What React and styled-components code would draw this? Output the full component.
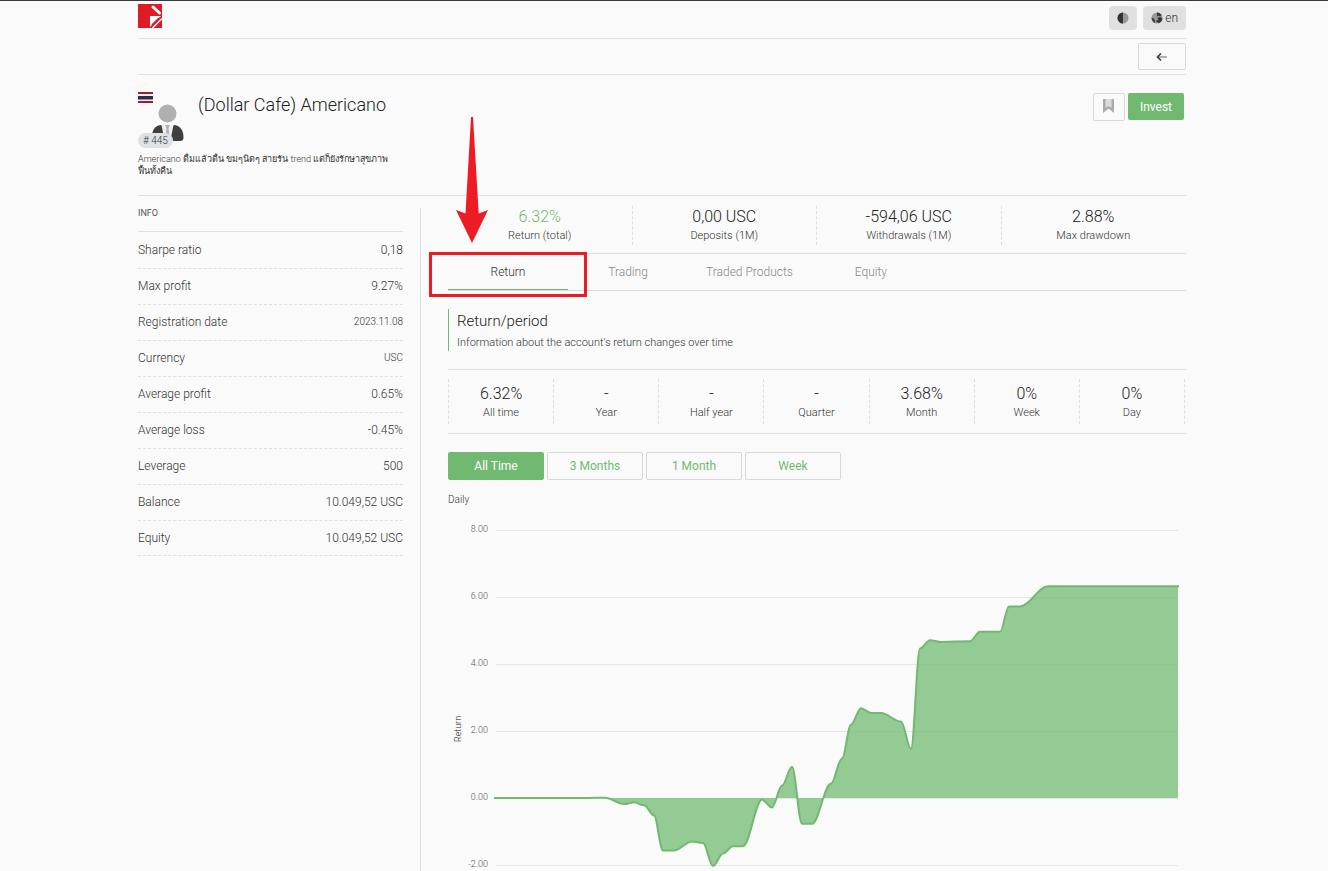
import React, { useState } from "react";
import styled, { createGlobalStyle } from "styled-components";

const GlobalStyle = createGlobalStyle`
  * {
    box-sizing: border-box;
  }
  body {
    margin: 0;
    background: #fafafa;
    color: #333;
    font-family: Roboto, "Noto Sans", sans-serif;
    font-weight: 300;
    font-size: 12px;
    line-height: 16px;
  }
  button {
    font-family: inherit;
    cursor: pointer;
  }
`;

const Page = styled.div`
  border-top: 1px solid #3a3a3f;
  padding: 0 142px 0 138px;
`;

const TopBar = styled.header`
  display: flex;
  justify-content: space-between;
  align-items: flex-start;
  height: 38px;
  padding-top: 3px;
  border-bottom: 1px solid #dee0e4;
`;

const LogoLink = styled.a`
  display: block;
  height: 24px;
`;

const TopActions = styled.div`
  display: flex;
  gap: 6px;
  padding-top: 2px;
`;

const SmallButton = styled.button`
  display: flex;
  align-items: center;
  justify-content: center;
  gap: 2px;
  height: 24px;
  padding: 0 8px;
  border: 0;
  border-radius: 4px;
  background: #e0e0e0;
  color: #333;
  font-size: 12px;
  font-weight: 300;
`;

const BackBar = styled.div`
  display: flex;
  justify-content: flex-end;
  padding: 4px 0;
  border-bottom: 1px solid #dee0e4;
`;

const BackButton = styled.button`
  display: flex;
  align-items: center;
  justify-content: center;
  width: 48px;
  height: 27px;
  border: 1px solid #d8d8da;
  border-radius: 2px;
  background: #fafafa;
`;

const Profile = styled.section`
  display: grid;
  grid-template-columns: 60px 1fr auto;
  padding: 17px 2px 18px 0;
  border-bottom: 1px solid #dee0e4;
`;

const Avatar = styled.div`
  position: relative;
  height: 59px;
`;

const AvatarArt = styled.svg`
  display: block;
`;

const Rank = styled.span`
  position: absolute;
  left: 0;
  bottom: 3px;
  padding: 0 5px;
  border-radius: 8px;
  background: #dee1e5;
  font-size: 10px;
  line-height: 15px;
`;

const Title = styled.h1`
  margin: 1px 0 0;
  color: #222;
  font-size: 18px;
  font-weight: 300;
  line-height: 24px;
`;

const ProfileActions = styled.div`
  display: flex;
  align-items: flex-start;
  gap: 3px;
  padding-top: 1px;
`;

const BookmarkButton = styled.button`
  display: flex;
  align-items: center;
  justify-content: center;
  width: 32px;
  height: 28px;
  padding: 0 2px 2px 0;
  border: 1px solid #d8d8da;
  border-radius: 2px;
  background: #fafafa;
`;

const InvestButton = styled.button`
  width: 56px;
  height: 27px;
  padding: 0;
  border: 0;
  border-radius: 2px;
  background: #71b971;
  color: #fff;
  font-size: 12px;
`;

const Description = styled.p`
  grid-column: 1 / -1;
  max-width: 256px;
  margin: 2px 0 0;
  font-size: 9px;
  line-height: 12px;
`;

const Columns = styled.div`
  display: flex;
`;

const Aside = styled.aside`
  flex: 0 0 283px;
  margin-top: 12px;
  padding-right: 17px;
  border-right: 1px solid #dee0e4;
`;

const AsideTitle = styled.h2`
  height: 24px;
  margin: 0;
  border-bottom: 1px solid #dee0e4;
  color: #555;
  font-size: 9px;
  font-weight: 400;
  line-height: 10px;
`;

const InfoList = styled.dl`
  margin: 0;
`;

const InfoRow = styled.div`
  display: flex;
  justify-content: space-between;
  align-items: center;
  height: 36px;
  padding-bottom: 1px;
  & + & {
    border-top: 1px dashed #dcdee0;
  }
  &:last-child {
    border-bottom: 1px dashed #dcdee0;
    padding-bottom: 0;
  }
`;

const InfoValue = styled.dd`
  margin: 0;
  font-size: ${(props) => (props.$small ? "10px" : "12px")};
`;

const Main = styled.main`
  flex: 1;
  min-width: 0;
  padding-left: 27px;
`;

const Stats = styled.div`
  display: flex;
  padding: 10px 1px 8px 0;
  border-bottom: 1px solid #dedede;
`;

const Stat = styled.div`
  flex: 1;
  padding-top: 1px;
  text-align: center;
  border-right: 1px dashed #dcdee0;
  &:last-child {
    border-right: 0;
  }
`;

const Periods = styled.div`
  display: flex;
  margin-top: 18px;
  padding: 9px 1px 9px 0;
  border-top: 1px solid #dee0e4;
  border-bottom: 1px solid #dee0e4;
`;

const Period = styled.div`
  flex: 1;
  padding: 5px 0 2px;
  text-align: center;
  border-right: 1px dashed #dcdee0;
  &:first-child {
    border-left: 1px dashed #dcdee0;
  }
`;

const Figure = styled.div`
  color: ${(props) => (props.$positive ? "#71b971" : "#222")};
  font-size: 16px;
  line-height: 20px;
`;

const Caption = styled.div`
  font-size: 11px;
  line-height: 18px;
`;

const Tabs = styled.nav`
  display: flex;
  height: 37px;
  border-bottom: 1px solid #dadcdc;
`;

const TabItem = styled.div`
  position: relative;
  display: flex;
`;

const Tab = styled.button`
  min-width: 120px;
  padding: 0 18px;
  border: 0;
  border-bottom: 1px solid ${(props) => (props.$active ? "#71b971" : "transparent")};
  background: none;
  color: ${(props) => (props.$active ? "#333" : "#888")};
  font-size: 12px;
  font-weight: 300;
`;

const Highlight = styled.div`
  position: absolute;
  left: -19px;
  top: -2px;
  width: 158px;
  height: 45px;
  border: 3px solid #ed1c24;
  pointer-events: none;
`;

const HighlightArrow = styled.svg`
  position: absolute;
  left: 8px;
  top: -137px;
  pointer-events: none;
`;

const SectionHead = styled.div`
  margin-top: 18px;
  padding-left: 8px;
  border-left: 1px solid #71b971;
`;

const SectionTitle = styled.h2`
  margin: 0 0 2px;
  color: #222;
  font-size: 15px;
  font-weight: 300;
  line-height: 24px;
`;

const SectionText = styled.p`
  margin: 0;
  font-size: 11px;
`;

const Ranges = styled.div`
  display: flex;
  gap: 3px;
  margin-top: 18px;
`;

const RangeButton = styled.button`
  width: 96px;
  height: 28px;
  padding: 0 0 1px;
  border: 1px solid ${(props) => (props.$active ? "#71b971" : "#d8d8da")};
  border-radius: 2px;
  background: ${(props) => (props.$active ? "#71b971" : "#fafafa")};
  color: ${(props) => (props.$active ? "#fff" : "#71b971")};
  font-size: 12px;
`;

const Interval = styled.div`
  margin-top: 12px;
  font-size: 10px;
`;

const ChartSvg = styled.svg`
  display: block;
  width: 100%;
  margin-top: 2px;
`;

const AxisLabel = styled.text`
  fill: #555;
  font-size: 9px;
`;

const AxisTitle = styled.text`
  fill: #222;
  font-size: 9px;
`;

const info = [
  { label: "Sharpe ratio", value: "0,18" },
  { label: "Max profit", value: "9.27%" },
  { label: "Registration date", value: "2023.11.08", small: true },
  { label: "Currency", value: "USC", small: true },
  { label: "Average profit", value: "0.65%" },
  { label: "Average loss", value: "-0.45%" },
  { label: "Leverage", value: "500" },
  { label: "Balance", value: "10.049,52 USC" },
  { label: "Equity", value: "10.049,52 USC" },
];

const stats = [
  { label: "Return (total)", value: "6.32%", positive: true },
  { label: "Deposits (1M)", value: "0,00 USC" },
  { label: "Withdrawals (1M)", value: "-594,06 USC" },
  { label: "Max drawdown", value: "2.88%" },
];

const periods = [
  { label: "All time", value: "6.32%" },
  { label: "Year", value: "-" },
  { label: "Half year", value: "-" },
  { label: "Quarter", value: "-" },
  { label: "Month", value: "3.68%" },
  { label: "Week", value: "0%" },
  { label: "Day", value: "0%" },
];

const tabs = ["Return", "Trading", "Traded Products", "Equity"];
const ranges = ["All Time", "3 Months", "1 Month", "Week"];

// [x, return %]
const points = [
  [47, 0], [137, 0], [157, 0.01], [176, -0.18], [186, -0.13], [196, -0.22],
  [206, -0.52], [215, -1.57], [226, -1.57], [244, -1.3], [255, -1.34],
  [265, -2.03], [275, -1.66], [285, -1.44], [295, -1.44], [314, -0.05],
  [324, -0.28], [334, 0.37], [344, 0.93], [354, -0.77], [364, -0.77],
  [383, 0.43], [394, 1.18], [403, 2.19], [413, 2.68], [423, 2.54],
  [433, 2.54], [453, 2.28], [463, 1.46], [472, 4.46], [482, 4.71],
  [492, 4.66], [522, 4.68], [532, 4.96], [552, 4.96], [561, 5.72],
  [572, 5.72], [600, 6.32], [730, 6.32],
];

const toY = (value) => 288 - value * 33.5;

const linePath = points
  .map(([x, value], i) => {
    const y = toY(value);
    if (i === 0) return `M${x} ${y}`;
    const [px, pv] = points[i - 1];
    const bend = (x - px) * 0.35;
    return `C${px + bend} ${toY(pv)} ${x - bend} ${y} ${x} ${y}`;
  })
  .join("");

const Logo = () => (
  <svg width="24" height="24" viewBox="0 0 24 24" aria-hidden="true">
    <path d="M0 0h24v24H0z" fill="#dd1c26" />
    <path d="M12 12h11L12 23z" fill="#fff" />
    <path d="M15 3l6.5 6" stroke="#fff" strokeWidth="3" strokeLinecap="round" />
    <path d="M15 21l6-6" stroke="#dd1c26" strokeWidth="3" strokeLinecap="round" />
    <path d="M14.500 24L24 14.500" stroke="#fff" strokeWidth="1.4" />
  </svg>
);

const ContrastIcon = () => (
  <svg width="12" height="12" viewBox="0 0 12 12" aria-hidden="true">
    <circle cx="6" cy="6" r="5.5" fill="#999" />
    <path d="M6 .5a5.5 5.5 0 0 0 0 11z" fill="#333" />
  </svg>
);

const GlobeIcon = () => (
  <svg width="12" height="12" viewBox="0 0 12 12" aria-hidden="true">
    <circle cx="6" cy="6" r="5.5" fill="#999" />
    <path d="M6 .5C8 .5 9.600 1.500 10.500 3L9 4.500 7.500 3.500 6 4.500z" fill="#333" />
    <path d="M6.500 6l2.500-1 2.400 1.500c-.2 2-1.500 3.800-3.400 4.600L5 9.500 6 8l1.500.2z" fill="#333" />
    <path d="M.6 5.500l2.200 1 1.400 2-.4 2.500C1.800 10 .5 8.500.6 5.500z" fill="#444" />
  </svg>
);

const ArrowLeftIcon = () => (
  <svg width="12" height="10" viewBox="0 0 12 10" fill="none" aria-hidden="true">
    <path d="M2 5h9" stroke="#888" strokeWidth="1.3" />
    <path d="M5 1.5L1.5 5 5 8.5" stroke="#333" strokeWidth="1.5" />
  </svg>
);

const BookmarkIcon = () => (
  <svg width="11" height="14" viewBox="0 0 11 14" aria-hidden="true">
    <path d="M0 0h11v14L5.5 9.5 0 14z" fill="#aaa" />
    <path d="M2.5 0h6v9l-3-2-3 2z" fill="#dcdcdc" />
  </svg>
);

const UserPicture = () => (
  <AvatarArt width="47" height="50" viewBox="0 0 47 50" role="img" aria-label="Thailand trader">
    <path d="M0 0h15v11H0z" fill="#f4f0f3" />
    <path d="M0 0h15v2H0zM0 9h15v2H0z" fill="#a51931" />
    <path d="M0 4h15v3.5H0z" fill="#2d2a4a" />
    <circle cx="29.5" cy="21.5" r="9" fill="#b0b0b0" />
    <path d="M14 45c0-7 3-12 9.5-12l6 12 6-12C42 33 45.500 38 45.500 45c0 3-1 4-4 4H18c-3 0-4-1-4-4z" fill="#404040" />
    <path d="M23.5 33h12l-3 15h-6z" fill="#f0f0f0" />
    <path d="M27 33h5l-1.500 3 1 8-2 3-2-3 1-8z" fill="#b0b0b0" />
  </AvatarArt>
);

const ReturnChart = () => (
  <ChartSvg viewBox="0 0 738 361" role="img" aria-label="Return chart">
    {[8, 6, 4, 2, 0, -2].map((tick) => (
      <g key={tick}>
        <line x1="48" x2="730" y1={Math.floor(toY(tick)) + 0.5} y2={Math.floor(toY(tick)) + 0.5} stroke="#e5e6e8" />
        <AxisLabel x="40" y={Math.floor(toY(tick)) + 2} textAnchor="end">
          {tick.toFixed(2)}
        </AxisLabel>
      </g>
    ))}
    <AxisTitle transform="translate(13 219) rotate(-90)" textAnchor="middle">
      Return
    </AxisTitle>
    <path d={`${linePath}V288H47z`} fill="#71b971" fillOpacity="0.75" />
    <path d={linePath} fill="none" stroke="#71b971" strokeWidth="2" strokeLinecap="square" />
  </ChartSvg>
);

const App = () => {
  const [tab, setTab] = useState("Return");
  const [range, setRange] = useState("All Time");

  return (
    <>
      <GlobalStyle />
      <Page>
        <TopBar>
          <LogoLink href="#" aria-label="Home">
            <Logo />
          </LogoLink>
          <TopActions>
            <SmallButton aria-label="Theme">
              <ContrastIcon />
            </SmallButton>
            <SmallButton>
              <GlobeIcon />
              en
            </SmallButton>
          </TopActions>
        </TopBar>
        <BackBar>
          <BackButton aria-label="Back">
            <ArrowLeftIcon />
          </BackButton>
        </BackBar>
        <Profile>
          <Avatar>
            <UserPicture />
            <Rank># 445</Rank>
          </Avatar>
          <Title>(Dollar Cafe) Americano</Title>
          <ProfileActions>
            <BookmarkButton aria-label="Bookmark">
              <BookmarkIcon />
            </BookmarkButton>
            <InvestButton>Invest</InvestButton>
          </ProfileActions>
          <Description>
            Americano ดื่มแล้วตื่น ขมๆนิดๆ สายรัน trend แต่ก็ยังรักษาสุขภาพ ฟื้นทั้งคืน
          </Description>
        </Profile>
        <Columns>
          <Aside>
            <AsideTitle>INFO</AsideTitle>
            <InfoList>
              {info.map((row) => (
                <InfoRow key={row.label}>
                  <dt>{row.label}</dt>
                  <InfoValue $small={row.small}>{row.value}</InfoValue>
                </InfoRow>
              ))}
            </InfoList>
          </Aside>
          <Main>
            <Stats>
              {stats.map((stat) => (
                <Stat key={stat.label}>
                  <Figure $positive={stat.positive}>{stat.value}</Figure>
                  <Caption>{stat.label}</Caption>
                </Stat>
              ))}
            </Stats>
            <Tabs>
              {tabs.map((name) => (
                <TabItem key={name}>
                  <Tab $active={name === tab} onClick={() => setTab(name)}>
                    {name}
                  </Tab>
                  {name === "Return" && (
                    <>
                      <Highlight />
                      <HighlightArrow width="32" height="126" viewBox="0 0 32 126" aria-hidden="true">
                        <path d="M15 0h2l5.7 96.5L32 93 16 126 0 93l9.5 3.5z" fill="#ed1c24" />
                      </HighlightArrow>
                    </>
                  )}
                </TabItem>
              ))}
            </Tabs>
            <SectionHead>
              <SectionTitle>Return/period</SectionTitle>
              <SectionText>Information about the account's return changes over time</SectionText>
            </SectionHead>
            <Periods>
              {periods.map((period) => (
                <Period key={period.label}>
                  <Figure>{period.value}</Figure>
                  <Caption>{period.label}</Caption>
                </Period>
              ))}
            </Periods>
            <Ranges>
              {ranges.map((name) => (
                <RangeButton key={name} $active={name === range} onClick={() => setRange(name)}>
                  {name}
                </RangeButton>
              ))}
            </Ranges>
            <Interval>Daily</Interval>
            <ReturnChart />
          </Main>
        </Columns>
      </Page>
    </>
  );
};

export default App;
